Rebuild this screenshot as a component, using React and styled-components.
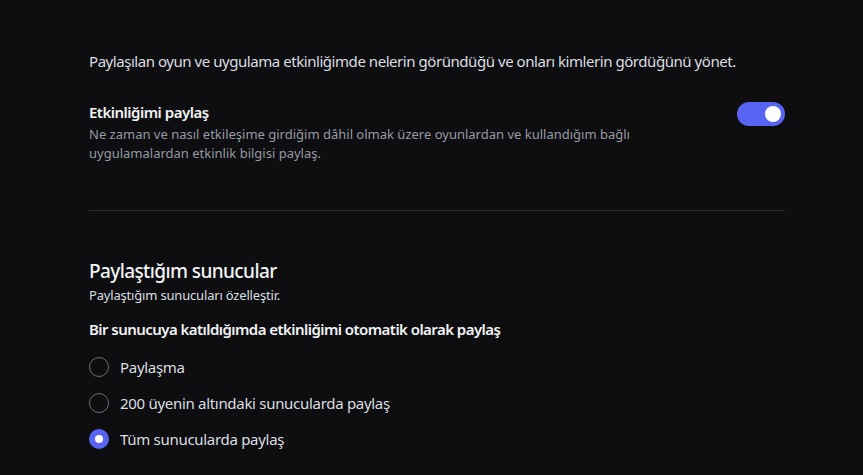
import React, { useState } from "react";
import styled, { createGlobalStyle } from "styled-components";

const GlobalStyle = createGlobalStyle`
  html, body {
    margin: 0;
    background: #0e0e10;
  }
  body {
    font-family: "Noto Sans", "Open Sans", sans-serif;
    color: #dbdee1;
  }
`;

const Page = styled.div`
  width: 696px;
  padding: 50px 0 0 89px;
`;

const Intro = styled.p`
  margin: 0;
  font-size: 15px;
  line-height: 22px;
  letter-spacing: -0.45px;
  color: #dbdee1;
`;

const SettingRow = styled.div`
  display: flex;
  justify-content: space-between;
  align-items: flex-start;
  margin-top: 29px;
`;

const SettingText = styled.div`
  max-width: 560px;
`;

const SettingTitle = styled.div`
  font-size: 15px;
  font-weight: 600;
  line-height: 22px;
  letter-spacing: -0.5px;
  color: #f2f3f5;
`;

const SettingDesc = styled.div`
  margin-top: 2px;
  font-size: 13px;
  line-height: 19px;
  color: #949ba4;
`;

const Toggle = styled.button`
  position: relative;
  flex: none;
  width: 48px;
  height: 24px;
  margin-top: 1px;
  border: none;
  border-radius: 12px;
  padding: 0;
  cursor: pointer;
  background: ${(p) => (p.$on ? "#5865f2" : "#4e5058")};
`;

const Knob = styled.span`
  position: absolute;
  top: 4px;
  left: ${(p) => (p.$on ? "28px" : "4px")};
  width: 16px;
  height: 16px;
  border-radius: 50%;
  background: #fff;
`;

const Divider = styled.hr`
  margin: 47px 0 0;
  border: none;
  border-top: 1px solid #2b2b30;
`;

const SectionTitle = styled.h2`
  margin: 47px 0 0;
  font-size: 19px;
  font-weight: 500;
  line-height: 26px;
  letter-spacing: -0.6px;
  color: #f2f3f5;
`;

const SectionDesc = styled.div`
  margin-top: 2px;
  font-size: 13px;
  line-height: 18px;
  letter-spacing: -0.18px;
  color: #dbdee1;
`;

const GroupLabel = styled.div`
  margin-top: 14px;
  font-size: 15px;
  font-weight: 600;
  line-height: 22px;
  letter-spacing: -0.55px;
  color: #f2f3f5;
`;

const RadioList = styled.div`
  display: flex;
  flex-direction: column;
  gap: 12px;
  margin-top: 15px;
`;

const RadioRow = styled.label`
  display: flex;
  align-items: center;
  gap: 11px;
  cursor: pointer;
  font-size: 15px;
  line-height: 24px;
  letter-spacing: -0.3px;
  color: #dbdee1;
`;

const Circle = styled.span`
  box-sizing: border-box;
  flex: none;
  width: 20px;
  height: 20px;
  border-radius: 50%;
  border: ${(p) => (p.$checked ? "none" : "1.5px solid #6d6f78")};
  background: ${(p) => (p.$checked ? "#5865f2" : "transparent")};
  display: flex;
  align-items: center;
  justify-content: center;

  &::after {
    content: "";
    display: ${(p) => (p.$checked ? "block" : "none")};
    width: 8px;
    height: 8px;
    border-radius: 50%;
    background: #fff;
  }
`;

const options = [
  "Paylaşma",
  "200 üyenin altındaki sunucularda paylaş",
  "Tüm sunucularda paylaş",
];

const App = () => {
  const [share, setShare] = useState(true);
  const [choice, setChoice] = useState(2);

  return (
    <>
      <GlobalStyle />
      <Page>
        <Intro>
          Paylaşılan oyun ve uygulama etkinliğimde nelerin göründüğü ve onları kimlerin gördüğünü yönet.
        </Intro>

        <SettingRow>
          <SettingText>
            <SettingTitle>Etkinliğimi paylaş</SettingTitle>
            <SettingDesc>
              Ne zaman ve nasıl etkileşime girdiğim dâhil olmak üzere oyunlardan ve kullandığım bağlı uygulamalardan etkinlik bilgisi paylaş.
            </SettingDesc>
          </SettingText>
          <Toggle $on={share} onClick={() => setShare(!share)}>
            <Knob $on={share} />
          </Toggle>
        </SettingRow>

        <Divider />

        <SectionTitle>Paylaştığım sunucular</SectionTitle>
        <SectionDesc>Paylaştığım sunucuları özelleştir.</SectionDesc>

        <GroupLabel>Bir sunucuya katıldığımda etkinliğimi otomatik olarak paylaş</GroupLabel>

        <RadioList>
          {options.map((label, i) => (
            <RadioRow key={label} onClick={() => setChoice(i)}>
              <Circle $checked={choice === i} />
              {label}
            </RadioRow>
          ))}
        </RadioList>
      </Page>
    </>
  );
};

export default App;
